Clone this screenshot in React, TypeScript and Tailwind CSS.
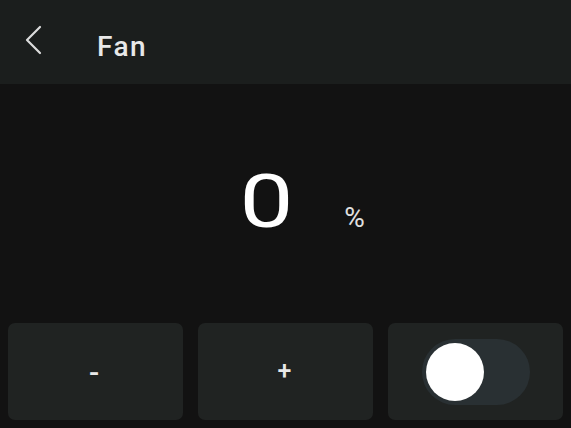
import React from "react";

export default function App() {
  return (
    <div
      className="w-[571px] h-[428px] bg-[#121212] flex flex-col overflow-hidden"
      style={{ fontFamily: "Roboto, 'Noto Sans', sans-serif" }}
    >
      <div className="h-[84px] bg-[#1b1e1d] flex items-center shrink-0">
        <div className="w-[97px] h-full flex items-center pl-[25px] pb-[4px]">
          <svg width="18" height="30" viewBox="0 0 18 30" fill="none">
            <path d="M15 2 L2 15 L15 28" stroke="#dcdcdc" strokeWidth="2.2" strokeLinecap="round" strokeLinejoin="round" />
          </svg>
        </div>
        <span className="text-[28px] font-medium text-[#e8e8e8] leading-none tracking-[1.5px] pt-[10px]">Fan</span>
      </div>
      <div className="flex-1 flex items-center justify-center">
        <div className="flex items-baseline pl-[40px] pb-[5px]">
          <span className="inline-block text-[75px] leading-none text-white scale-x-[1.28] tracking-[4px]">0</span>
          <span className="text-[28px] leading-none text-[#e0e0e0] ml-[52px]">%</span>
        </div>
      </div>
      <div className="h-[105px] px-[8px] pb-[8px] grid grid-cols-3 gap-[15px] shrink-0">
        <div className="rounded-[7px] bg-[#202322] flex items-center justify-center">
          <span className="text-[30px] font-medium text-[#e8e8e8] leading-none pr-[3px] pt-[2px]">-</span>
        </div>
        <div className="rounded-[7px] bg-[#202322] flex items-center justify-center">
          <span className="text-[25px] font-medium text-[#e8e8e8] leading-none pb-[2px] pr-[2px]">+</span>
        </div>
        <div className="rounded-[7px] bg-[#202322] flex items-center justify-center">
          <div className="w-[108px] h-[66px] rounded-full bg-[#293033] flex items-center pl-[4px]">
            <div className="w-[58px] h-[58px] rounded-full bg-white" />
          </div>
        </div>
      </div>
    </div>
  );
}
